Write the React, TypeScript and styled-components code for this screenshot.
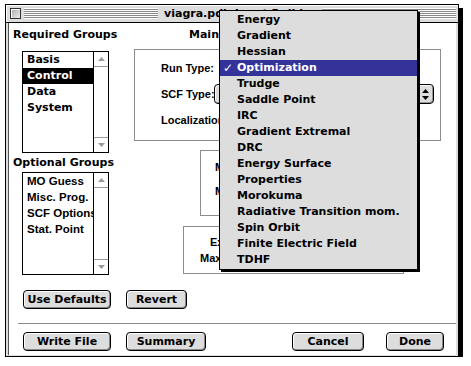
import styled, { createGlobalStyle } from 'styled-components';

// Mac OS 8 "platinum" dialog. Charcoal is approximated by DejaVu Sans Bold,
// the narrower label face by Liberation Sans Bold.
const CHARCOAL = `"DejaVu Sans", Verdana, sans-serif`;
const NARROW = `"Liberation Sans", Arial, sans-serif`;

const RUN_TYPES = [
  'Energy',
  'Gradient',
  'Hessian',
  'Optimization',
  'Trudge',
  'Saddle Point',
  'IRC',
  'Gradient Extremal',
  'DRC',
  'Energy Surface',
  'Properties',
  'Morokuma',
  'Radiative Transition mom.',
  'Spin Orbit',
  'Finite Electric Field',
  'TDHF',
];

const REQUIRED_GROUPS = ['Basis', 'Control', 'Data', 'System'];
const OPTIONAL_GROUPS = ['MO Guess', 'Misc. Prog.', 'SCF Options', 'Stat. Point'];

const GlobalStyle = createGlobalStyle`
  body {
    margin: 0;
    background: #fff;
    color: #000;
    font-family: ${CHARCOAL};
    font-size: 11px;
    font-weight: bold;
  }
`;

interface ListProps {
  items: string[];
  selected?: string;
  top: number;
  height: number;
  narrow?: boolean;
}

const GroupList = ({ items, selected, top, height, narrow }: ListProps) => (
  <ListFrame $top={top} $height={height}>
    <ListItems>
      {items.map((item) => (
        <ListItem key={item} $selected={item === selected} $narrow={narrow}>
          {item}
        </ListItem>
      ))}
    </ListItems>
    <ScrollBar>
      <ScrollArrow $down={false}>
        <svg width="7" height="4" viewBox="0 0 7 4">
          <path d="M3.5 0 L7 4 L0 4 Z" fill="#999" />
        </svg>
      </ScrollArrow>
      <ScrollTrack />
      <ScrollArrow $down>
        <svg width="7" height="4" viewBox="0 0 7 4">
          <path d="M0 0 L7 0 L3.5 4 Z" fill="#999" />
        </svg>
      </ScrollArrow>
    </ScrollBar>
  </ListFrame>
);

const PopupArrows = () => (
  <svg width="7" height="11" viewBox="0 0 7 11">
    <path d="M3.5 0 L7 4 L0 4 Z M0 7 L7 7 L3.5 11 Z" fill="#000" />
  </svg>
);

const App = () => (
  <>
    <GlobalStyle />
    <Desk>
      <Window>
        <TitleBar>
          <CloseBox />
          <Stripes />
          <Title>viagra.pdb Input Builder</Title>
          <Stripes />
        </TitleBar>

        <Frame>
          <Content>
            <MainArea>
              <LeftCol>
                <SectionLabel>Required Groups</SectionLabel>
                <GroupList items={REQUIRED_GROUPS} selected="Control" top={8} height={102} />
                <SectionLabel $top={2}>Optional Groups</SectionLabel>
                <GroupList items={OPTIONAL_GROUPS} top={1} height={103} narrow />
              </LeftCol>

              <RightCol>
                <SectionLabel $left={55}>Main Parameters</SectionLabel>
                <GroupBox $top={6} $left={0} $width={307} $height={92}>
                  <ParamRows>
                    <ParamRow>
                      <ParamLabel $width={58}>Run Type:</ParamLabel>
                      <Popup $width={192}>
                        <PopupText>Optimization</PopupText>
                        <PopupArrowBox>
                          <PopupArrows />
                        </PopupArrowBox>
                      </Popup>
                    </ParamRow>
                    <ParamRow>
                      <ParamLabel $width={53}>SCF Type:</ParamLabel>
                      <Popup $width={220}>
                        <PopupText>RHF</PopupText>
                        <PopupArrowBox>
                          <PopupArrows />
                        </PopupArrowBox>
                      </Popup>
                    </ParamRow>
                    <ParamRow>
                      <ParamLabel $width={118}>Localization Method:</ParamLabel>
                      <Popup $width={120}>
                        <PopupText>None</PopupText>
                        <PopupArrowBox>
                          <PopupArrows />
                        </PopupArrowBox>
                      </Popup>
                    </ParamRow>
                  </ParamRows>
                </GroupBox>

                <GroupBox $top={9} $left={66} $width={211} $height={66}>
                  <FieldRows>
                    <FieldRow $indent={14}>
                      Molecule Charge:
                      <TextField>0</TextField>
                    </FieldRow>
                    <FieldRow $indent={14}>
                      Multiplicity:
                      <TextField>1</TextField>
                    </FieldRow>
                  </FieldRows>
                </GroupBox>

                <GroupBox $top={10} $left={49} $width={221} $height={48}>
                  <FieldRows $pad={7} $gap={0}>
                    <FieldRow $indent={26}>Exec Type: Normal Run</FieldRow>
                    <FieldRow $indent={16}>Max SCF Iterations: 30</FieldRow>
                  </FieldRows>
                </GroupBox>
              </RightCol>
            </MainArea>

            <ButtonRow $top={15}>
              <PushButton $width={88}>Use Defaults</PushButton>
              <PushButton $width={61}>Revert</PushButton>
            </ButtonRow>

            <Separator />

            <ButtonRow $top={8}>
              <PushButton $width={88}>Write File</PushButton>
              <PushButton $width={80}>Summary</PushButton>
              <Spacer />
              <PushButton $width={72}>Cancel</PushButton>
              <PushButton $width={58} $last>
                Done
              </PushButton>
            </ButtonRow>
          </Content>
        </Frame>

        <PopupMenu>
          {RUN_TYPES.map((type) => (
            <MenuItem key={type} $active={type === 'Optimization'}>
              <MenuCheck>{type === 'Optimization' ? '✓' : ''}</MenuCheck>
              {type}
            </MenuItem>
          ))}
        </PopupMenu>
      </Window>
    </Desk>
  </>
);

const Desk = styled.div`
  padding: 4px 0 0 5px;
`;

const Window = styled.div`
  position: relative;
  width: 454px;
  height: 353px;
  box-sizing: border-box;
  border: 1px solid #000;
  box-shadow: 4px 4px 0 #000;
  background: #dddddd;
  display: flex;
  flex-direction: column;
`;

const TitleBar = styled.div`
  height: 17px;
  border-bottom: 1px solid #000;
  display: flex;
  align-items: center;
  padding: 0 2px 0 4px;
  background: #dddddd;
  box-shadow: inset 1px 1px 0 #fff;
`;

const CloseBox = styled.div`
  width: 11px;
  height: 11px;
  box-sizing: border-box;
  border: 1px solid #333;
  background: linear-gradient(135deg, #aaa 0%, #eee 100%);
  box-shadow: inset 1px 1px 0 #fff;
  margin-right: 3px;
`;

const Stripes = styled.div`
  flex: 1;
  height: 11px;
  background: repeating-linear-gradient(to bottom, #fff 0 1px, #888 1px 2px);
`;

const Title = styled.div`
  padding: 0 6px;
  line-height: 16px;
  white-space: nowrap;
`;

const Frame = styled.div`
  flex: 1;
  display: flex;
  padding: 0 2px 1px 2px;
`;

const Content = styled.div`
  flex: 1;
  background: #fff;
  border-left: 1px solid #555;
  display: flex;
  flex-direction: column;
`;

const MainArea = styled.div`
  display: flex;
`;

const LeftCol = styled.div`
  width: 125px;
  display: flex;
  flex-direction: column;
  align-items: flex-start;
`;

const RightCol = styled.div`
  display: flex;
  flex-direction: column;
  align-items: flex-start;
`;

const SectionLabel = styled.div<{ $top?: number; $left?: number }>`
  margin: ${(p) => p.$top ?? 4}px 0 0 ${(p) => p.$left ?? 4}px;
  line-height: 16px;
  white-space: nowrap;
`;

const ListFrame = styled.div<{ $top: number; $height: number }>`
  margin: ${(p) => p.$top}px 0 0 13px;
  width: 87px;
  height: ${(p) => p.$height}px;
  box-sizing: border-box;
  border: 1px solid #000;
  display: flex;
`;

const ListItems = styled.div`
  flex: 1;
  display: flex;
  flex-direction: column;
  min-width: 0;
`;

const ListItem = styled.div<{ $selected?: boolean; $narrow?: boolean }>`
  height: 16px;
  line-height: 16px;
  padding-left: 4px;
  white-space: nowrap;
  overflow: hidden;
  font-family: ${(p) => (p.$narrow ? NARROW : CHARCOAL)};
  font-size: ${(p) => (p.$narrow ? '11.5px' : '11px')};
  background: ${(p) => (p.$selected ? '#000' : 'transparent')};
  color: ${(p) => (p.$selected ? '#fff' : '#000')};
`;

const ScrollBar = styled.div`
  width: 14px;
  border-left: 1px solid #000;
  display: flex;
  flex-direction: column;
`;

const ScrollArrow = styled.div<{ $down: boolean }>`
  height: 14px;
  display: flex;
  align-items: center;
  justify-content: center;
  ${(p) => (p.$down ? 'border-top: 1px solid #999;' : 'border-bottom: 1px solid #999;')}
`;

const ScrollTrack = styled.div`
  flex: 1;
  background: #fff;
`;

const GroupBox = styled.div<{ $top: number; $left: number; $width: number; $height: number }>`
  margin: ${(p) => p.$top}px 0 0 ${(p) => p.$left}px;
  width: ${(p) => p.$width}px;
  height: ${(p) => p.$height}px;
  box-sizing: border-box;
  border: 1px solid #8c8c8c;
`;

const ParamRows = styled.div`
  display: flex;
  flex-direction: column;
  gap: 6px;
  padding: 8px 0 0 26px;
`;

const ParamRow = styled.div`
  height: 20px;
  display: flex;
  align-items: center;
`;

const ParamLabel = styled.span<{ $width: number }>`
  width: ${(p) => p.$width}px;
  flex-shrink: 0;
  font-family: ${NARROW};
  font-size: 11px;
  white-space: nowrap;
`;

const Popup = styled.div<{ $width: number }>`
  width: ${(p) => p.$width}px;
  height: 20px;
  box-sizing: border-box;
  border: 1px solid #000;
  border-radius: 4px;
  background: #dddddd;
  box-shadow: inset 1px 1px 0 #fff, inset -1px -1px 0 #999;
  display: flex;
  align-items: center;
`;

const PopupText = styled.span`
  flex: 1;
  padding-left: 8px;
  white-space: nowrap;
`;

const PopupArrowBox = styled.div`
  width: 16px;
  height: 100%;
  border-left: 1px solid #888;
  display: flex;
  align-items: center;
  justify-content: center;
`;

const FieldRows = styled.div<{ $pad?: number; $gap?: number }>`
  display: flex;
  flex-direction: column;
  gap: ${(p) => p.$gap ?? 8}px;
  padding-top: ${(p) => p.$pad ?? 8}px;
`;

const FieldRow = styled.div<{ $indent: number }>`
  height: 16px;
  line-height: 16px;
  padding-left: ${(p) => p.$indent}px;
  font-family: ${NARROW};
  font-size: 11px;
  white-space: nowrap;
  display: flex;
  align-items: center;
  gap: 8px;
`;

const TextField = styled.span`
  width: 40px;
  height: 14px;
  line-height: 14px;
  border: 1px solid #000;
  padding-left: 3px;
`;

const ButtonRow = styled.div<{ $top: number }>`
  margin-top: ${(p) => p.$top}px;
  padding: 0 12px 0 14px;
  display: flex;
  gap: 15px;
`;

const Spacer = styled.div`
  flex: 1;
`;

const PushButton = styled.button<{ $width: number; $last?: boolean }>`
  width: ${(p) => p.$width}px;
  height: 19px;
  padding: 0;
  margin-left: ${(p) => (p.$last ? '7px' : '0')};
  box-sizing: border-box;
  border: 1px solid #000;
  border-radius: 4px;
  background: #dddddd;
  box-shadow: inset 1px 1px 0 #fff, inset -1px -1px 0 #888;
  font: inherit;
  line-height: 16px;
  color: #000;
  white-space: nowrap;
`;

const Separator = styled.div`
  margin: 14px 0 0 9px;
  height: 1px;
  background: #8c8c8c;
`;

const PopupMenu = styled.div`
  position: absolute;
  left: 213px;
  top: 5px;
  width: 199px;
  box-sizing: border-box;
  border: 1px solid #000;
  box-shadow: 2px 2px 0 #000;
  background: #dddddd;
  padding: 1px 0;
`;

const MenuItem = styled.div<{ $active?: boolean }>`
  height: 16px;
  line-height: 16px;
  display: flex;
  white-space: nowrap;
  background: ${(p) => (p.$active ? '#333399' : 'transparent')};
  color: ${(p) => (p.$active ? '#fff' : '#000')};
`;

const MenuCheck = styled.span`
  width: 17px;
  padding-left: 3px;
  box-sizing: border-box;
  font-size: 12px;
  font-weight: normal;
`;

export default App;
